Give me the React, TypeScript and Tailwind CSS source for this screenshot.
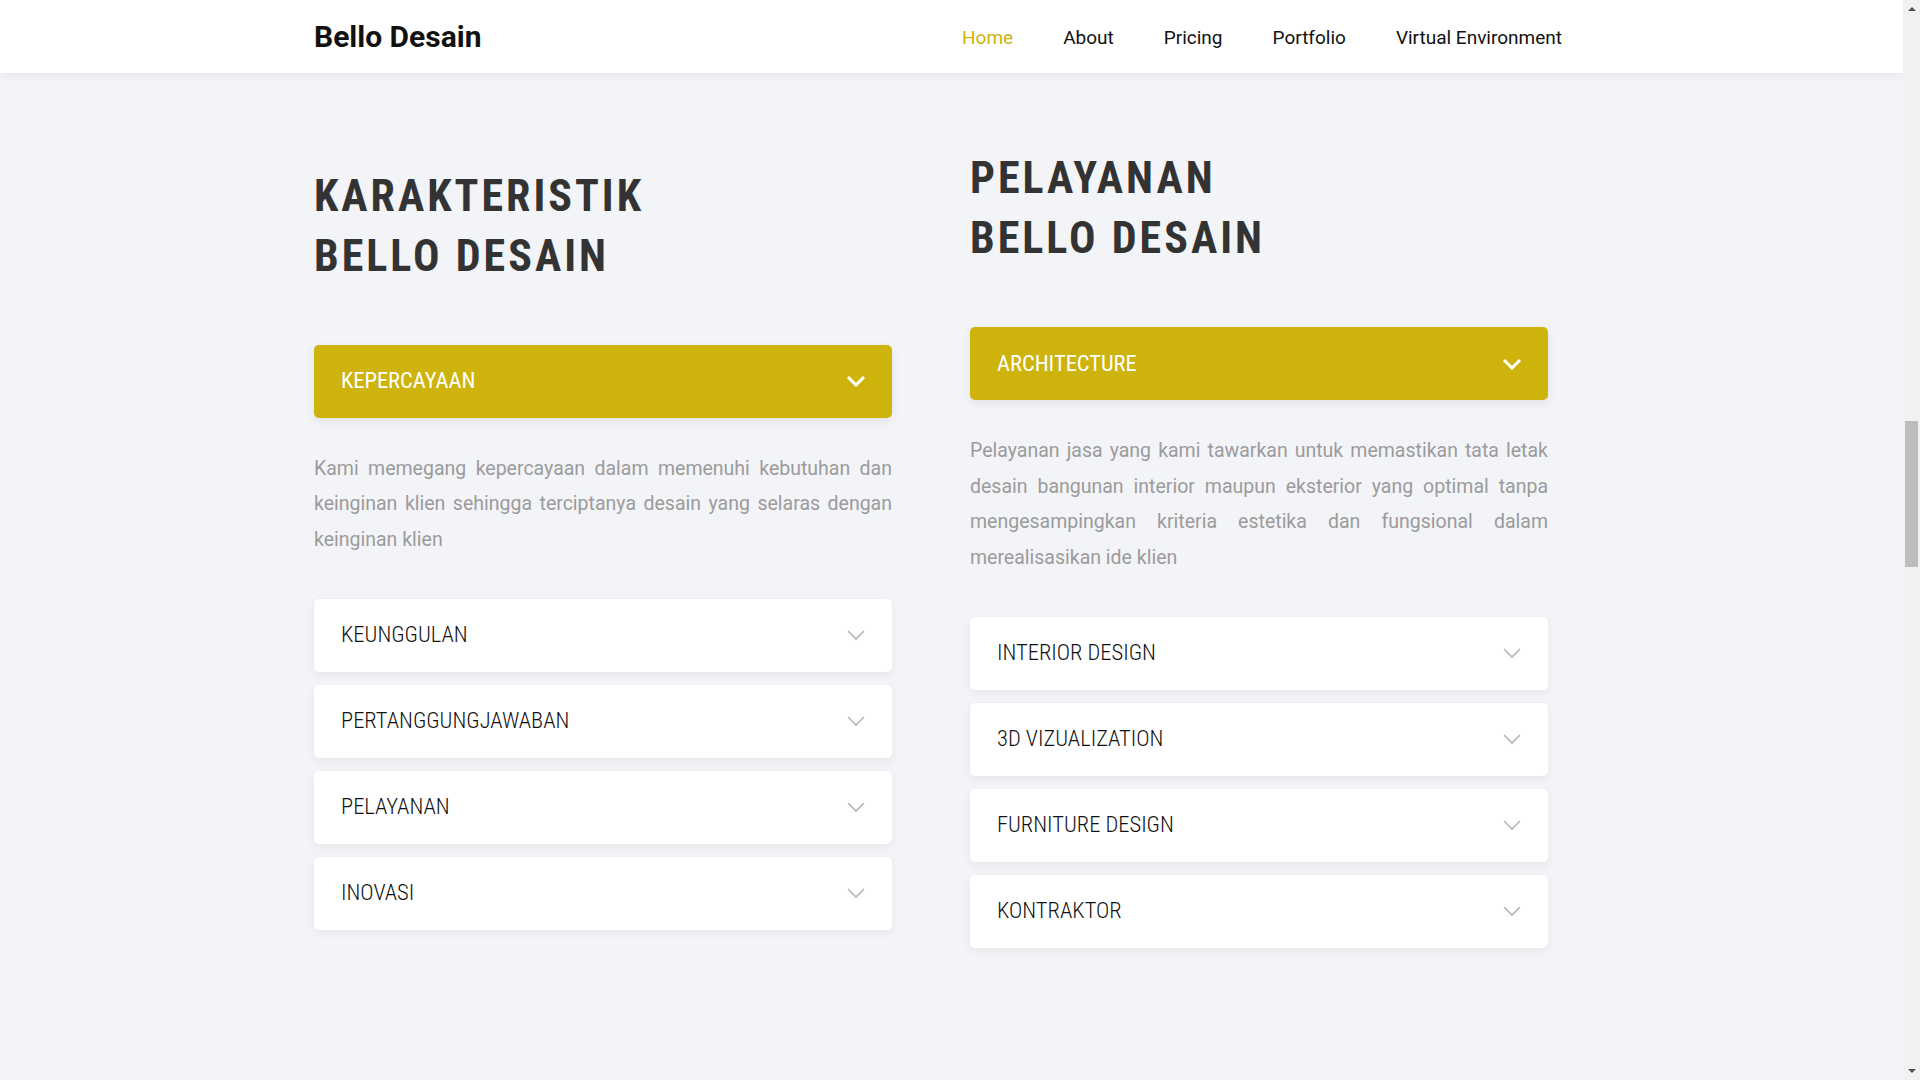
import React from "react";

const Chevron = ({ active }: { active?: boolean }) => (
  <svg
    width="20"
    height="12"
    viewBox="0 0 20 12"
    fill="none"
    className="shrink-0"
  >
    <path
      d="M2 2 L10 10 L18 2"
      stroke={active ? "#ffffff" : "#b5b5b5"}
      strokeWidth={active ? 3 : 1.6}
      strokeLinecap="butt"
      strokeLinejoin="miter"
    />
  </svg>
);

const ActiveItem = ({ title }: { title: string }) => (
  <div className="flex h-[73px] items-center justify-between rounded-[5px] bg-[#cdb30c] pl-[27px] pr-[26px] shadow-[0_3px_10px_rgba(0,0,0,0.08)]">
    <span className="font-['Roboto_Condensed','Roboto',sans-serif] text-[22.5px] font-normal uppercase text-white [font-stretch:condensed]">
      {title}
    </span>
    <Chevron active />
  </div>
);

const Item = ({ title }: { title: string }) => (
  <div className="flex h-[73px] items-center justify-between rounded-[5px] bg-white pl-[27px] pr-[26px] shadow-[0_3px_10px_rgba(0,0,0,0.06)]">
    <span className="font-['Roboto_Condensed','Roboto',sans-serif] text-[22.5px] font-light uppercase text-[#111111] [font-stretch:condensed]">
      {title}
    </span>
    <Chevron />
  </div>
);

const Column = ({
  line1,
  line2,
  active,
  text,
  items,
}: {
  line1: string;
  line2: string;
  active: string;
  text: string;
  items: string[];
}) => (
  <div className="flex flex-col">
    <h2 className="font-['Roboto_Condensed','Roboto',sans-serif] text-[44px] font-bold uppercase leading-[60px] tracking-[3px] text-[#333333] [font-stretch:condensed]">
      {line1}
      <br />
      {line2}
    </h2>
    <div className="mt-[59px]">
      <ActiveItem title={active} />
    </div>
    <p className="mt-[33px] font-['Roboto',sans-serif] text-[19.5px] leading-[35.5px] text-[#9b9b9b] text-justify">
      {text}
    </p>
    <div className="mt-[41.5px] flex flex-col gap-[13px]">
      {items.map((t) => (
        <Item key={t} title={t} />
      ))}
    </div>
  </div>
);

const Scrollbar = () => (
  <div className="relative h-full w-[17px] shrink-0 bg-[#f1f1f1]">
    <div className="absolute left-1/2 top-[7px] h-0 w-0 -translate-x-1/2 border-x-[4px] border-b-[4px] border-x-transparent border-b-[#505050]" />
    <div className="absolute left-[2px] right-[2px] top-[421px] h-[146px] bg-[#bdbdbd]" />
    <div className="absolute bottom-[7px] left-1/2 h-0 w-0 -translate-x-1/2 border-x-[4px] border-t-[4px] border-x-transparent border-t-[#505050]" />
  </div>
);

export default function App() {
  return (
    <div className="flex h-screen w-full overflow-hidden">
      <div className="min-w-0 flex-1 overflow-hidden bg-[#f3f4f8] font-['Roboto',sans-serif]">
        <header className="relative z-10 bg-white shadow-[0_2px_10px_rgba(0,0,0,0.06)]">
          <div className="mx-auto flex h-[73px] w-[1275px] items-center justify-between">
            <div className="text-[30px] font-bold text-[#111111]">Bello Desain</div>
            <nav className="mt-[3px] flex items-center text-[19px] text-[#111111]">
              <a className="px-[25px] text-[#cdb30c]">Home</a>
              <a className="px-[25px]">About</a>
              <a className="px-[25px]">Pricing</a>
              <a className="px-[25px]">Portfolio</a>
              <a className="pl-[25px] pr-[27px]">Virtual Environment</a>
            </nav>
          </div>
        </header>
        <section className="pt-[75px] pb-[200px]">
          <div className="mx-auto w-[1275px]">
            <div className="grid grid-cols-[578px_578px] items-center gap-x-[78px]">
              <Column
                line1="Karakteristik"
                line2="Bello Desain"
                active="Kepercayaan"
                text="Kami memegang kepercayaan dalam memenuhi kebutuhan dan keinginan klien sehingga terciptanya desain yang selaras dengan keinginan klien"
                items={["Keunggulan", "Pertanggungjawaban", "Pelayanan", "Inovasi"]}
              />
              <Column
                line1="Pelayanan"
                line2="Bello Desain"
                active="Architecture"
                text="Pelayanan jasa yang kami tawarkan untuk memastikan tata letak desain bangunan interior maupun eksterior yang optimal tanpa mengesampingkan kriteria estetika dan fungsional dalam merealisasikan ide klien"
                items={["Interior Design", "3D Vizualization", "Furniture Design", "Kontraktor"]}
              />
            </div>
          </div>
        </section>
      </div>
      <Scrollbar />
    </div>
  );
}
